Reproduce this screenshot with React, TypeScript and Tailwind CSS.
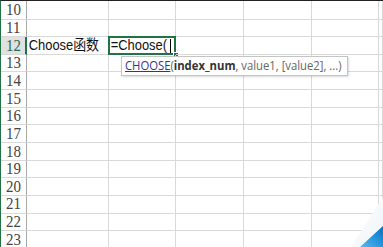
const rows = [10, 11, 12, 13, 14, 15, 16, 17, 18, 19, 20, 21, 22, 23];
const cols = ["w-[82px]", "w-[67px]", "w-[68px]", "w-[68px]", "w-[67px]", "flex-1"];

function Cell({ row, col, width }: { row: number; col: number; width: string }) {
  const isA12 = row === 12 && col === 0;
  const isB12 = row === 12 && col === 1;
  return (
    <div className={`${width} relative h-full border-r border-b border-[#d9d9d9] flex items-center`}>
      {isA12 && (
        <span className="inline-block whitespace-nowrap pl-[2px] text-[15px] text-[#111] origin-left scale-x-[0.86] font-['Liberation_Sans','Noto_Sans_CJK_SC',sans-serif]">
          Choose函数
        </span>
      )}
      {isB12 && (
        <>
          <span className="inline-block whitespace-nowrap pl-[2px] text-[15px] text-[#111] origin-left scale-x-[0.86] font-['Liberation_Sans','Noto_Sans_CJK_SC',sans-serif]">
            =Choose(
          </span>
          <span className="absolute left-[61px] top-[2px] w-px h-[14px] bg-black" />
          {/* active cell frame */}
          <div className="absolute -left-px -top-px -right-px -bottom-px border-2 border-[#217346]" />
          <div className="absolute -right-[4px] -bottom-[4px] w-[6px] h-[6px] bg-[#217346] border border-white" />
        </>
      )}
    </div>
  );
}

export default function App() {
  return (
    <div className="relative w-[383px] h-[247px] overflow-hidden bg-white border-t border-[#222] border-l border-l-[#217346]">
      {rows.map((row, i) => (
        <div key={row} className={`flex ${i === 0 ? "h-[18.5px]" : "h-[17.65px]"}`}>
          <div
            className={`w-[26px] h-full flex items-center justify-center border-b border-[#d9d9d9] text-[17px] font-['Liberation_Serif',serif] ${
              row === 12
                ? "bg-[#e1e1e1] text-[#2d6a47] border-r-2 border-r-[#217346]"
                : "bg-white text-[#444] border-r border-r-[#a8a8a8]"
            }`}
          >
            <span className="inline-block scale-x-[0.88]">{row}</span>
          </div>
          {cols.map((w, c) => (
            <Cell key={c} row={row} col={c} width={w} />
          ))}
        </div>
      ))}

      {/* function hint tooltip */}
      <div className="absolute left-[120px] top-[55px] w-[227px] h-[20px] px-[3px] flex items-center bg-white border border-[#c4c4c4] shadow-[1px_1px_2px_rgba(0,0,0,0.15)] whitespace-nowrap text-[12px] font-['Open_Sans',sans-serif]">
        <span className="inline-block origin-left scale-x-[0.94]">
          <span className="text-[#34358a] underline">CHOOSE</span>
          <span className="text-[#666]">(</span>
          <span className="font-bold text-[#333]">index_num</span>
          <span className="text-[#666]">, value1, [value2], ...)</span>
        </span>
      </div>

      {/* page curl in the corner */}
      <svg className="absolute right-0 bottom-0" width="40" height="52" viewBox="0 0 40 52">
        <defs>
          <linearGradient id="fold" x1="0" y1="0" x2="1" y2="1">
            <stop offset="0" stopColor="#ffffff" />
            <stop offset="1" stopColor="#eef4f8" />
          </linearGradient>
          <linearGradient id="blue" x1="0" y1="1" x2="1" y2="0">
            <stop offset="0" stopColor="#5fb8ee" />
            <stop offset="0.6" stopColor="#1e8fd8" />
            <stop offset="1" stopColor="#0f6fb8" />
          </linearGradient>
        </defs>
        <polygon points="40,2 8,52 40,52" fill="url(#fold)" />
        <polygon points="40,31 17,52 40,52" fill="url(#blue)" />
      </svg>
    </div>
  );
}
